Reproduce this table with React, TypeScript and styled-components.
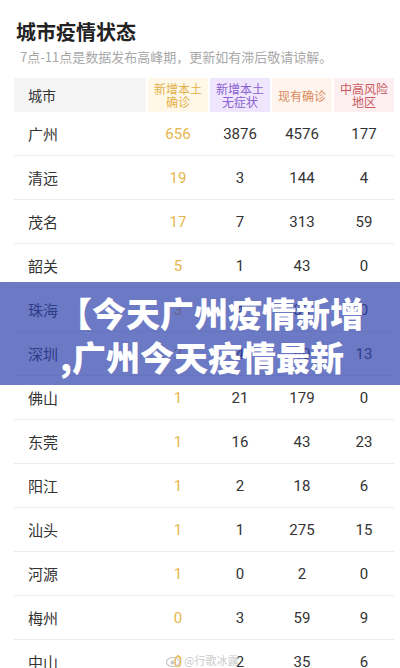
import React from "react";
import styled, { createGlobalStyle } from "styled-components";

const Global = createGlobalStyle`
  html, body { margin: 0; padding: 0; background: #fff; }
  body { font-family: Roboto, "Noto Sans CJK SC", sans-serif; color: #333; overflow: hidden; }
`;

const Page = styled.div`
  position: relative;
  width: 400px;
  height: 668px;
  overflow: hidden;
  background: #fff;
`;

const Head = styled.div`
  padding: 18px 0 0 16px;
  display: flex;
  flex-direction: column;
  gap: 2px;
`;

const Title = styled.h1`
  margin: 0;
  font-family: "Noto Sans CJK SC", sans-serif;
  font-size: 20px;
  line-height: 28px;
  font-weight: 700;
  color: #222;
`;

const Sub = styled.p`
  margin: 0 0 0 4px;
  font-family: "Noto Sans CJK SC", sans-serif;
  font-size: 13px;
  line-height: 18px;
  color: #a8a8a8;
`;

const Table = styled.div`
  margin: 12px 6px 0 14px;
  display: flex;
  flex-direction: column;
`;

const HeaderRow = styled.div`
  display: grid;
  grid-template-columns: 132px repeat(4, 60px);
  column-gap: 2px;
  height: 34px;
`;

const HCell = styled.div<{ $bg: string; $fg: string; $city?: boolean }>`
  background: ${(p) => p.$bg};
  color: ${(p) => p.$fg};
  font-family: "Noto Sans CJK SC", sans-serif;
  font-size: ${(p) => (p.$city ? "14px" : "12px")};
  line-height: 13px;
  display: flex;
  align-items: center;
  justify-content: ${(p) => (p.$city ? "flex-start" : "center")};
  padding-left: ${(p) => (p.$city ? "14px" : "0")};
  text-align: center;
`;

const Row = styled.div`
  display: grid;
  grid-template-columns: 132px repeat(4, 60px);
  column-gap: 2px;
  height: 43px;
  border-bottom: 1px solid #ececec;
  align-items: center;
`;

const City = styled.div`
  font-family: "Noto Sans CJK SC", sans-serif;
  font-size: 15px;
  color: #333;
  padding-left: 14px;
`;

const Num = styled.div<{ $gold?: boolean }>`
  font-family: Roboto, sans-serif;
  font-size: 15px;
  text-align: center;
  color: ${(p) => (p.$gold ? "#e6b64c" : "#333")};
`;

const Banner = styled.div`
  position: absolute;
  left: 0;
  right: 0;
  top: 282px;
  height: 103px;
  box-sizing: border-box;
  padding: 9px 0 0 58px;
  background: rgba(46, 64, 171, 0.7);
  color: #fff;
  font-family: "Noto Sans CJK SC", sans-serif;
  font-weight: 900;
  font-size: 34px;
  line-height: 44px;
  white-space: nowrap;
`;

const Line = styled.div<{ $shift?: number }>`
  margin-left: ${(p) => p.$shift ?? 0}px;
`;

const Mark = styled.div`
  position: absolute;
  left: 166px;
  top: 652px;
  display: flex;
  align-items: center;
  gap: 2px;
  font-family: "Noto Sans CJK SC", sans-serif;
  font-size: 11px;
  color: rgba(190, 190, 190, 0.85);
  text-shadow: 0 0 1px #fff;
`;

const header = [
  { t: ["新增本土", "确诊"], bg: "#fff8e8", fg: "#e3b14a" },
  { t: ["新增本土", "无症状"], bg: "#efe6fd", fg: "#8a5fd0" },
  { t: ["现有确诊"], bg: "#fff5ee", fg: "#d88a5c" },
  { t: ["中高风险", "地区"], bg: "#fdeff0", fg: "#c85a5e" },
];

const rows: [string, string, string, string, string][] = [
  ["广州", "656", "3876", "4576", "177"],
  ["清远", "19", "3", "144", "4"],
  ["茂名", "17", "7", "313", "59"],
  ["韶关", "5", "1", "43", "0"],
  ["珠海", "3", "4", "33", "0"],
  ["深圳", "2", "4", "40", "13"],
  ["佛山", "1", "21", "179", "0"],
  ["东莞", "1", "16", "43", "23"],
  ["阳江", "1", "2", "18", "6"],
  ["汕头", "1", "1", "275", "15"],
  ["河源", "1", "0", "2", "0"],
  ["梅州", "0", "3", "59", "9"],
  ["中山", "0", "2", "35", "6"],
];

export default function App() {
  return (
    <Page>
      <Global />
      <Head>
        <Title>城市疫情状态</Title>
        <Sub>7点-11点是数据发布高峰期，更新如有滞后敬请谅解。</Sub>
      </Head>
      <Table>
        <HeaderRow>
          <HCell $bg="#f5f5f5" $fg="#333" $city>
            城市
          </HCell>
          {header.map((h, i) => (
            <HCell key={i} $bg={h.bg} $fg={h.fg}>
              <div>
                {h.t.map((l, j) => (
                  <div key={j}>{l}</div>
                ))}
              </div>
            </HCell>
          ))}
        </HeaderRow>
        {rows.map((r) => (
          <Row key={r[0]}>
            <City>{r[0]}</City>
            <Num $gold>{r[1]}</Num>
            <Num>{r[2]}</Num>
            <Num>{r[3]}</Num>
            <Num>{r[4]}</Num>
          </Row>
        ))}
      </Table>
      <Banner>
        <Line>【今天广州疫情新增</Line>
        <Line $shift={2}>,广州今天疫情最新</Line>
      </Banner>
      <Mark>
        <svg width="16" height="13" viewBox="0 0 16 13">
          <ellipse cx="7" cy="8" rx="6.5" ry="4.5" fill="none" stroke="#c8c8c8" strokeWidth="1.2" />
          <circle cx="6.5" cy="8.5" r="2" fill="#c8c8c8" />
          <path d="M11 1.5 a4 4 0 0 1 3.5 4" fill="none" stroke="#e6b64c" strokeWidth="1.2" />
        </svg>
        <span>@行歌冰露</span>
      </Mark>
    </Page>
  );
}
